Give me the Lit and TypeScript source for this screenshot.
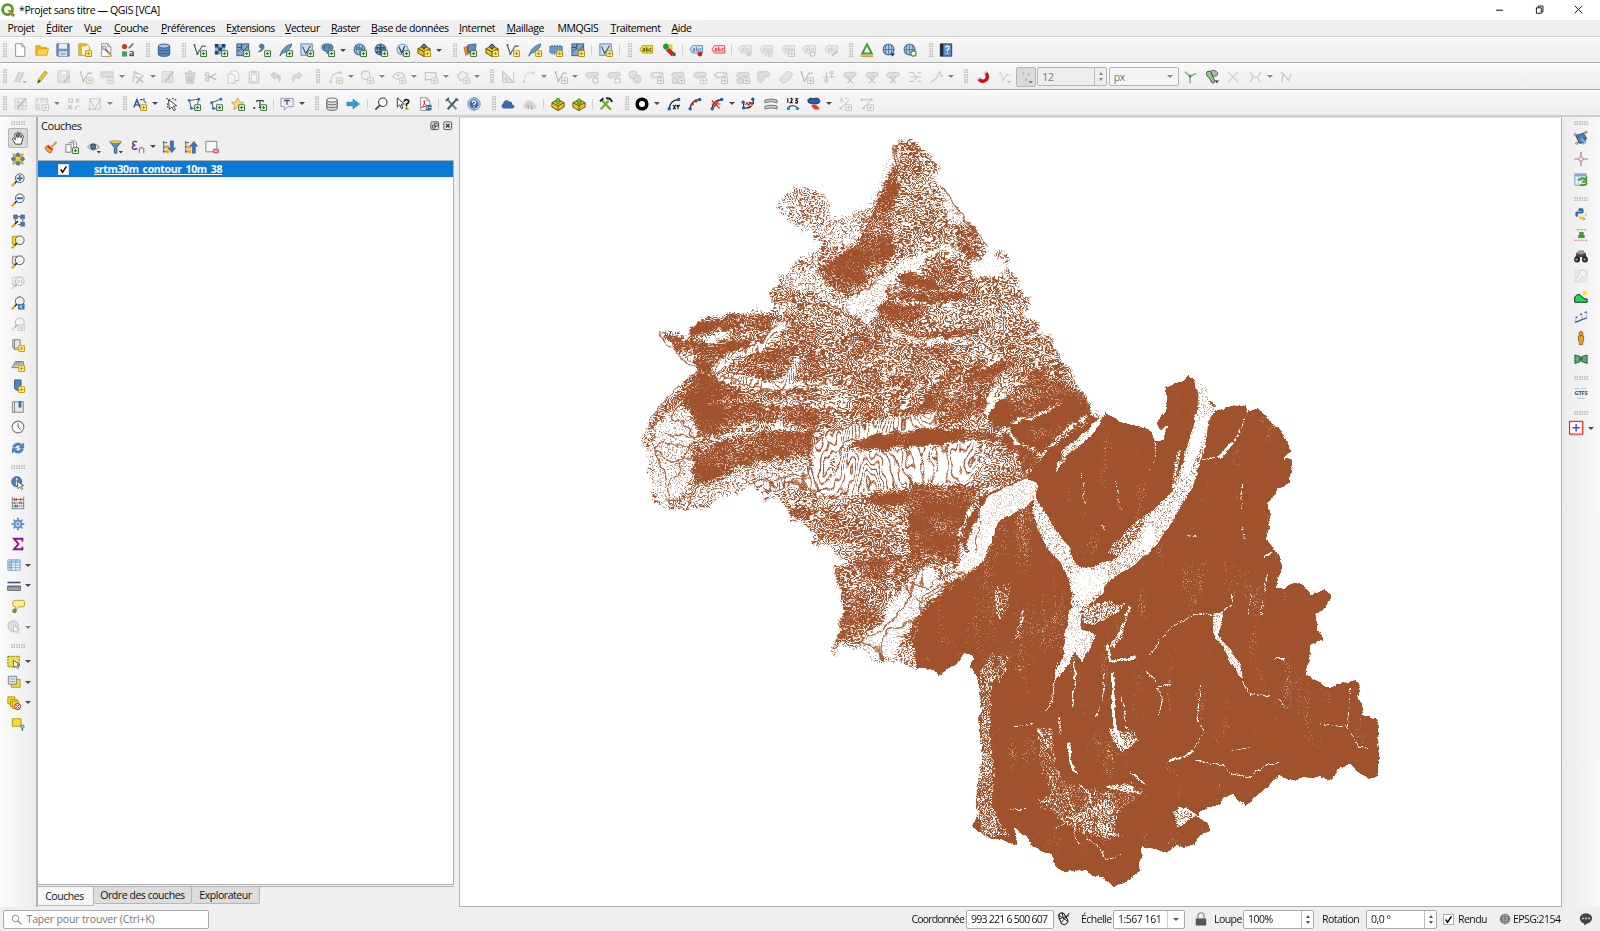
import { LitElement, html, svg, css, nothing } from "lit";
import { customElement, property } from "lit/decorators.js";
import { unsafeSVG } from "lit/directives/unsafe-svg.js";

/* ---------- icon library, 16 x 16 grid ---------- */
const badge = (stroke: string, fill = "#fff") =>
  `<rect x="8.8" y="8.8" width="6.6" height="6.6" rx=".8" fill="${fill}" stroke="${stroke}" stroke-width="1.3"/><path d="M12.1 10.3v3.6M10.3 12.1h3.6" stroke="${stroke}" stroke-width="1.3"/>`;
const G = badge("#3c7a3c");
const Y = badge("#b8960c", "#fff6c0");
const vee = `<path d="M1.5 2.5 5 12.5 10.5 3.5h4" fill="none" stroke="#4a5a6a" stroke-width="1.3"/><circle cx="1.7" cy="2.4" r="1.2" fill="#4a5a6a"/><circle cx="5" cy="12.6" r="1.2" fill="#4a5a6a"/>`;
const feather = `<path d="M1 15C3 8 7 3 14.5 1 14 6 9 10.5 3.500 11.500z" fill="#6c9ac8" stroke="#3b5f86"/>`;
const globe = `<circle cx="7.500" cy="7.500" r="6.300" fill="#a9c8e6" stroke="#3e688f" stroke-width="1.2"/><path d="M1.500 7.500h12M7.500 1.500v12M4.500 2.500q-2 5 0 10M10.500 2.500q2 5 0 10" fill="none" stroke="#3e688f" stroke-width=".9"/>`;
const mesh = `<rect x="1" y="1" width="13.500" height="13.500" fill="#7fa6d0" stroke="#33567c"/><path d="m2 10 4-4 3 3 5-6M1.500 5h5v-4M9 14V9h5" fill="none" stroke="#26466a" stroke-width="1.100"/>`;
const cube = `<path d="M1 6.500 8 3l7 3.500v5L8 15.500l-7-4z" fill="#e8c020" stroke="#5b4a08"/><path d="M1 6.500 8 10l7-3.500M8 10v5.500" fill="none" stroke="#5b4a08"/>`;
const tag = (c: string, s: string) =>
  `<path d="M1 7.500 4 3h11.500v8.500H4z" fill="${c}" stroke="${s}" stroke-width=".9"/><path d="M4.500 6.300h2v3h-2v-1.500h2M8.500 4.500v4.800h2v-2.500h-2M14.300 6.300h-1.800v3h1.800" fill="none" stroke="${s === "#a89000" ? "#443c00" : s}" stroke-width=".9"/>`;
const lens = `<circle cx="10" cy="6" r="5" fill="#eef3f7" stroke="#555" stroke-width="1.100"/><path d="M6.500 9.500 4 12" stroke="#222" stroke-width="1.800"/><path d="M4.300 11.700.8 15.200" stroke="#d9a514" stroke-width="2.200"/>`;
const blob = `<path d="M1 6C1 2 6 2.500 9 3c4-1.500 6.500 0 6 2.500S11 8 8 7.500C6 10 1 9.500 1 6z" fill="#bdbdbd" stroke="#777"/>`;
const page = `<path d="M3 .8h7l3.500 3.500v11H3z" fill="#fff" stroke="#888"/><path d="M10 .8v3.500h3.500" fill="none" stroke="#888"/>`;
const line = `<path d="M2.500 13.500C3 7 6 3.500 13 3" fill="none" stroke="#222" stroke-width="1.200"/><circle cx="2.500" cy="13.500" r="2" fill="#1b62a8"/><circle cx="13.300" cy="2.800" r="2" fill="#1b62a8"/>`;
const poly = `<path d="M2.500 4 13.500 2.500 11 12M2.500 4 5 13h5" fill="none" stroke="#555" stroke-width="1.100"/><g fill="#2a6fe0"><circle cx="2.500" cy="4" r="1.700"/><circle cx="13.500" cy="2.500" r="1.700"/><circle cx="5" cy="13" r="1.700"/></g>`;
const cursor = `<path d="m7 6 7.500 5-3 .5 2 3-1.500 1-2-3L8 14.500z" fill="#fff" stroke="#444" stroke-width=".9"/>`;
const book = `<path d="M2 2h8.500v11H4L2 11z" fill="#e6e6e6" stroke="#777"/><path d="M4 2v11" stroke="#777"/>`;

const ICONS: Record<string, string> = {
  logo: `<circle cx="7.500" cy="7.500" r="5.700" fill="none" stroke="#5a9a2a" stroke-width="3.200"/><path d="M8 8h3l4.500 5v2.500h-3z" fill="#5a9a2a"/><path d="m8 8 6 6" stroke="#ee7913" stroke-width="2"/>`,
  new: page,
  open: `<path d="M1 13.500V3h5l1.500 2H13v2" fill="#f0b91b" stroke="#c8940a" stroke-width=".8"/><path d="M1 14 3.500 6.500h12L13.500 14z" fill="#ffd23e" stroke="#c8940a" stroke-width=".8"/>`,
  save: `<path d="M1 1h14v14H2l-1-1z" fill="#6f98c4" stroke="#4a6c92"/><rect x="3.500" y="1" width="9" height="5.500" fill="#e9eef4"/><rect x="3.500" y="9.500" width="9" height="5.500" fill="#dfe4ea"/><path d="M5 11.500h6M5 13.300h6" stroke="#888" stroke-width=".8"/>`,
  layout: `<path d="M1 1h9l3 3v10H1z" fill="#fbf6dc" stroke="#a88a20"/><path d="M1 1h3.500v13H1zM1 1h9v3H1z" fill="#e2b824"/>${Y}`,
  manager: `${page}<path d="m5 5 8 8" stroke="#777" stroke-width="2.400"/><circle cx="6" cy="5.500" r="2.200" fill="#ddd" stroke="#777"/><path d="m10 11 4.500 4" stroke="#e6b022" stroke-width="2.200"/>`,
  style: `<circle cx="4" cy="4" r="3" fill="#cc3b22"/><path d="m9 6 5-5.500" stroke="#446e9e" stroke-width="1.800"/><rect x="1" y="9.500" width="6" height="6" fill="#4f9a6e"/><path d="M10 10q4-1.500 4 1v4M14 12q-4 0-4 1.500t4 .5" fill="none" stroke="#444" stroke-width="1.300"/>`,
  db: `<path d="M1.500 3.500v9.500c0 3 13 3 13 0V3.500" fill="#5f8fc2" stroke="#2c5580"/><ellipse cx="8" cy="3.500" rx="6.500" ry="2.300" fill="#a8c6e4" stroke="#2c5580"/><path d="M1.500 6.800c0 3 13 3 13 0M1.500 10c0 3 13 3 13 0" fill="none" stroke="#2c5580"/>`,
  dbw: `<path d="M2 3.500v9.500c0 3 12 3 12 0V3.500" fill="#e2e2e2" stroke="#555"/><ellipse cx="8" cy="3.500" rx="6" ry="2.300" fill="#f4f4f4" stroke="#555"/><path d="M2 6.800c0 3 12 3 12 0M2 10c0 3 12 3 12 0" fill="none" stroke="#555"/>`,
  vec: vee + G, vecY: vee + Y,
  raster: `<path d="M1 1h12v12H1z" fill="#8fb4da"/><path d="M1 1h4v4H1zM9 1h4v4H9zM5 5h4v4H5zM1 9h4v4H1z" fill="#1f3f63"/>${G}`,
  mesh: mesh + G, meshY: mesh + Y,
  comma: `<path d="M2 9.500c2.500-1 3.500-2.500 3-3.500-3 0-3.500-4.500 0-4.800C9.500 1 10 8 2 10.500z" fill="#4c7cae" stroke="#2e5680" stroke-width=".6"/>${G}`,
  feather: feather + G, featherY: feather + Y,
  vmesh: `<rect x="1" y="1" width="13" height="13" fill="#cfdeee" stroke="#5b7fa6"/><path d="m3 4 3.500 8L12 3" fill="none" stroke="#33567c" stroke-width="1.200"/>${G}`,
  vmeshY: `<rect x="1" y="1" width="13" height="13" fill="#cfdeee" stroke="#5b7fa6"/><path d="m3 4 3.500 8L12 3" fill="none" stroke="#33567c" stroke-width="1.200"/>${Y}`,
  pg: `<path d="M1 4c0-4 12-4 12.500 0 .5 3-1.500 5-3 5l-1 3H7L6 9C3 10 1 7 1 4z" fill="#5b8dc0" stroke="#2c5580"/><path d="M4 3.500v3M9.500 3.500v3" stroke="#2c5580"/>${G}`,
  wms: globe + `<path d="M3 4q3-2 4 0t4 0v3q-3 1-4 0T3 8z" fill="#4f80b4"/>` + G,
  wcs: globe + `<path d="M2 4.500h11v2H2zM2 9h11v2H2zM6 2h3v11H6z" fill="#1f3f63" opacity=".75"/>` + G,
  wfs: `<circle cx="7.500" cy="7.500" r="6.300" fill="#cfe0f2" stroke="#6d94bc" stroke-width="1.200"/><path d="m3.500 4.500 3 7 3.500-8" fill="none" stroke="#1f3f63" stroke-width="1.300"/>` + G,
  pack: cube + `<path d="M5 4q3-5 6 0l-3 3z" fill="#4f80b4" stroke="#223"/>` + Y,
  layers: `<path d="m1 5 8-2 2 8-8 3z" fill="#e0902a" stroke="#a05a10" stroke-width=".6"/><path d="m4 3 8-1 1 8-8 2z" fill="#c44" /><path d="m6 2 9-1-1 8-8 1z" fill="#5b8dc0" stroke="#33567c" stroke-width=".8"/>${G}`,
  chip: `<rect x="1" y="4" width="14" height="7" fill="#6c9ac8" stroke="#4a78a8"/><path d="M3.500 2v2M6.500 2v2M9.500 2v2M12.500 2v2M3.500 11v2.500M6.500 11v2.500" stroke="#4a78a8" stroke-width="1.300"/>${badge("#b8960c", "#fff6c0")}`,
  labY: tag("#f5e03a", "#a89000"), labR: tag("#ffe2e2", "#e5262b"),
  labB: tag("#cfe2f5", "#4a78a8") + `<circle cx="12.500" cy="12.500" r="2.800" fill="#c22"/>`,
  lab1: tag("#ddd", "#888") + `<circle cx="12.500" cy="12.500" r="2.800" fill="#999"/>`,
  lab2: tag("#ddd", "#888") + `<ellipse cx="11.500" cy="13" rx="3.800" ry="2.200" fill="#fff" stroke="#777"/><circle cx="11.500" cy="13" r="1" fill="#555"/>`,
  lab3: tag("#ddd", "#888") + badge("#888"),
  lab4: tag("#ddd", "#888") + `<circle cx="12" cy="12.500" r="2.600" fill="#fff" stroke="#777" stroke-width="1.200"/>`,
  lab5: tag("#ddd", "#888") + `<path d="m9 15 5.500-5.500" stroke="#777" stroke-width="2.200"/>`,
  diag: `<circle cx="4.500" cy="4" r="3.300" fill="#1d9c2c"/><path d="M8 1.500h4v6H8z" fill="#e6d412"/><path d="m4 8 5-2 5 5-3 4z" fill="#d1261e"/><path d="M12 11h3.500v4H12z" fill="#1d7c2c"/>`,
  tri: `<path d="M8 1.500 13.500 12h-11z" fill="#fff" stroke="#3d9c2a" stroke-width="2.200"/><path d="M1 15h14" stroke="#f08a1c" stroke-width="1.700"/>`,
  net1: globe + `<path d="M9 12h6l-3 3.500z" fill="#26374a"/>`,
  net2: globe + `<circle cx="12" cy="12" r="3" fill="#fff" stroke="#3c8a3c" stroke-width="1.300"/>`,
  help: `<path d="M1.500 1h13v14h-13z" fill="#5c8fc6" stroke="#1d3550"/><path d="M1.500 1H5v14H1.500z" fill="#1d2d3f"/><path d="M7.500 5.500q0-2 2-2t2 1.800-2 2.500v1.700M9.500 11v1.500" fill="none" stroke="#fff" stroke-width="1.400"/>`,
  pencils: `<path d="M1.500 13 6.500 2l2 1-5 10.500zM5.500 13.500 10.500 2.500l2 1-5 10.500z" fill="#b5b0a8" stroke="#777" stroke-width=".7"/><path d="M11 12.500h5l-2.500 3z" fill="#555"/>`,
  pencil: `<path d="M3 15 4.200 10.500 11.500 1.200 14 3.200 6.700 12.600z" fill="#f4cf2a" stroke="#9a7a10" stroke-width=".9"/><path d="m3 15 1.200-4 2.300 1.800z" fill="#3a3420"/>`,
  savee: `<path d="M1 1h13v13H1z" fill="#ccc" stroke="#888"/><path d="M4 1h7v5H4z" fill="#fff" stroke="#999"/><path d="m8 14 6.500-8" stroke="#777" stroke-width="2"/>`,
  shape: `<path d="M1 2h14v6H1z" fill="#b8b8b8" stroke="#888"/>${Y}`,
  vertex: `<path d="M2 14 4 3l7 2" fill="none" stroke="#666" stroke-width="1.200"/><path d="m5 7 9 7M14 6l-8 9" stroke="#777" stroke-width="2"/><circle cx="4" cy="2.500" r="1.800" fill="#999"/>`,
  editc: `<path d="M1.500 1.500h12v12.500h-12z" fill="#ddd4bb" stroke="#888"/><path d="M4 5h7M4 8h7M4 11h7" stroke="#999"/><path d="m5 13 9-11" stroke="#777" stroke-width="2"/>`,
  trash: `<path d="M3 4.500h10L12 15H4z" fill="#e8a8a8" stroke="#b05a5a"/><path d="M1.500 3.500h13M6 1.500h4M6 7v6M8 7v6M10 7v6" stroke="#a05050" stroke-width="1.200"/>`,
  cut: `<path d="m14 4-9 5.500M14 11 5 7" stroke="#666" stroke-width="1.400"/><circle cx="3.500" cy="5" r="1.900" fill="none" stroke="#666" stroke-width="1.300"/><circle cx="3.500" cy="11" r="1.900" fill="none" stroke="#666" stroke-width="1.300"/>`,
  copy: `<path d="M5.500 1h6l3 3v8h-9z" fill="#fff" stroke="#777"/><path d="M2 4.500h6l2.500 2.500v8H2z" fill="#f4f4f4" stroke="#777"/>`,
  paste: `<path d="M2.500 2h11v13h-11z" fill="#ddd" stroke="#777"/><path d="M5 5h6v8H5z" fill="#fff" stroke="#999"/><path d="M5.500.8h5v2.500h-5z" fill="#888"/>`,
  undo: `<path d="M2 6 6.500 2v2.500C12 4 14.500 8 12 13.500c0-4-2-5.500-5.500-5.300V10.500z" fill="#d8a090" stroke="#a66"/>`,
  redo: `<path d="M14 6 9.500 2v2.500C4 4 1.500 8 4 13.500c0-4 2-5.500 5.500-5.300V10.500z" fill="#b4c0b0" stroke="#686"/>`,
  arc: `<path d="M2 14C2 6 6 3 13 3" fill="none" stroke="#777" stroke-width="1.200"/><circle cx="2" cy="13.500" r="1.500" fill="#888"/><circle cx="13" cy="3" r="1.500" fill="#888"/>${Y}`,
  circ: `<circle cx="6.500" cy="6" r="5" fill="#eee" stroke="#777" stroke-width="1.200"/>${Y}`,
  ell: `<path d="M1 8C3 2 11 1 14.500 6 12 11 5 12 1 8z" fill="#eee" stroke="#777" stroke-width="1.200"/><circle cx="7" cy="6" r="1.500" fill="#888"/>${Y}`,
  rec: `<path d="M1.500 3h12v8h-12z" fill="#eee" stroke="#777" stroke-width="1.200"/><path d="M.5 2h2v2h-2zM12.500 2h2v2h-2zM.5 10h2v2h-2z" fill="#888"/>${Y}`,
  pent: `<path d="M2 6 7 1.500 13 4l-1 6-7 2z" fill="#eee" stroke="#777" stroke-width="1.200"/>${Y}`,
  sq: `<path d="M2 1.500 14 14H2z" fill="#ddd" stroke="#777" stroke-width="1.300"/><path d="m5 8 3.500 3.500H5zM14.500 1.500v13" fill="none" stroke="#777"/>`,
  dotc: `<path d="M2.500 14C2 6 5 3 13.500 3" fill="none" stroke="#777" stroke-width="1.200" stroke-dasharray="2 1.500"/><circle cx="2.500" cy="13.500" r="1.500" fill="#999"/><circle cx="13" cy="3" r="1.500" fill="#999"/>`,
  vgrey: vee + badge("#777"),
  b1: blob + `<circle cx="12" cy="12" r="3" fill="#fff" stroke="#777" stroke-width="1.200"/>`,
  b2: blob + `<path d="M9 10h6v4.500H9z" fill="#fff" stroke="#777" stroke-width="1.200"/>`,
  b3: `<circle cx="5.500" cy="5.500" r="4.500" fill="#ccc" stroke="#777"/><circle cx="10.500" cy="10.500" r="4.500" fill="#ccc" stroke="#777"/><circle cx="10.500" cy="10.500" r="1.800" fill="#fff" stroke="#777"/>`,
  b4: blob + `<ellipse cx="7" cy="5.500" rx="3" ry="1.300" fill="#fff"/>` + badge("#777"),
  b5: blob + `<path d="M1 11c4-3 8-1 7 4H2z" fill="#bdbdbd" stroke="#777"/>` + badge("#777"),
  b6: blob + badge("#a08a60"),
  b7: blob + `<ellipse cx="7" cy="5.500" rx="3.500" ry="1.500" fill="#fff"/>` + badge("#a07070"),
  b8: `<path d="M2 2h9c5 0 5 6 0 5.500-4 0-3 7-7 7S0 4 2 2z" fill="#bdbdbd" stroke="#777"/>`,
  b9: `<path d="M2 13C-1 9 5 7 7 4c3-5 11-1 7 4-3 4-8 9-12 5z" fill="#c9c9bd" stroke="#777"/>`,
  split: `<path d="M1 8h14M5 2v12M11 1v8" stroke="#777" stroke-width="1.200"/><circle cx="5" cy="12" r="2" fill="#bbb" stroke="#777"/><circle cx="11" cy="3" r="2" fill="#bbb" stroke="#777"/>`,
  scis: blob + `<path d="m5 8 6 7M11 8l-6 7" stroke="#a66" stroke-width="1.400"/>`,
  merge: `<path d="M1 3h5l4 5-4 5H1M15 3h-4M15 13h-4M2 8h13" fill="none" stroke="#888" stroke-width="1.200"/>`,
  rot: `<path d="m2 14 6-4 4-8 3 5h-3" fill="none" stroke="#888" stroke-width="1.300"/>`,
  magnet: `<path d="M3.200 9.500C5 15 13 13 13 7.500 13 5 12 4 10.800 2.800" fill="none" stroke="#d01010" stroke-width="3.800"/><path d="m9.200 4.300 3-3M1.200 10.300l4-1.500" stroke="#f0c8c8" stroke-width="2.200"/>`,
  snapv: `<path d="m2 2 4 10 3-6h5" fill="none" stroke="#888" stroke-width="1.500" stroke-dasharray="2.500 1"/><path d="M10 12.500h5l-2.500 3z" fill="#666"/>`,
  dots: `<g fill="#aaa"><circle cx="5" cy="4" r="1.200"/><circle cx="11" cy="5" r="1.200"/><circle cx="8" cy="11" r="1.200"/></g><path d="M11 12.500h5l-2.500 3z" fill="#777"/>`,
  topo: `<path d="M2 2 8 7l7-3M8 7v8" fill="none" stroke="#7ab87a" stroke-width="1.700"/><circle cx="8" cy="7" r="1.600" fill="#777"/>`,
  snapg: `<path d="M5 2.500C7-.500 14 0 14.500 4c0 3-3 3.500-5 3z" fill="#b4b4b4" stroke="#555"/><path d="M1.500 4c0-3.500 6-3.500 6 0C8 7 11 10 11 13c0 2.500-3.500 2.500-4 0C6.500 9 1.500 8 1.500 4z" fill="#8ccc86" stroke="#333"/><path d="M11 12h5l-2.500 3z" fill="#333"/>`,
  xx: `<path d="m2 2 12 12M14 2 2 14" stroke="#999" stroke-width="1.300"/>`,
  hh: `<path d="m2 2 4 6h5l4-6M2 14l4-6M11 8l3 6" fill="none" stroke="#998" stroke-width="1.700"/>`,
  nn: `<path d="m3 14 2-10 6 8 3-8M2 3l4 2" fill="none" stroke="#887" stroke-width="1.500"/>`,
  grA: `<path d="M1 1.500h13v12.500H1zM1 6h13M1 10h13M5 1.500V14M10 1.500V14" fill="#eee" stroke="#888"/><path d="m4 13 9-11" stroke="#666" stroke-width="2"/>`,
  grB: `<path d="M1 1.500h13.500v12.500H1z" fill="#bbb" stroke="#888"/><path d="m1 6 13 2M5 2l2 12M11 2l-3 12" stroke="#fff"/>${badge("#888")}`,
  grC: `<path d="M2 2h4v4H2zM10 2l4 4M14 2l-4 4M2 10l4 4M6 10H2v4M9.500 14q0-4 5-4" fill="none" stroke="#777" stroke-width="1.300"/>`,
  grD: `<path d="M2 2h12v12H2zM2 2l6 12 6-12" fill="none" stroke="#888" stroke-width="1.200"/><circle cx="2" cy="14" r="1.500" fill="#888"/>`,
  abc: `<path d="M1 12 4.500 3 8 12M2.500 9h4" fill="none" stroke="#2c5a92" stroke-width="1.700"/><path d="M8 3h3M12.500 1.500v3M13 5l2 2" stroke="#2c5a92" stroke-width="1.400"/>${Y}`,
  selc: `<path d="M1.500 1.500 6 3.500M3 7v5M8 1.500l5 2" stroke="#555" stroke-width="1.500" stroke-dasharray="2 1.300"/><path d="m4 3 9.500 7-4 .5 2.500 4-2 1-2-4-3 2.500z" fill="#fff" stroke="#333"/>`,
  poly: poly + G,
  pline: `<path d="M13.500 2.500 3 6.500 5 13h5" fill="none" stroke="#555" stroke-width="1.100"/><g fill="#2a6fe0"><circle cx="13.500" cy="2.500" r="1.700"/><circle cx="3" cy="6.500" r="1.700"/><circle cx="5" cy="13" r="1.700"/></g>${G}`,
  star: `<path d="m7.500.8 2 4.800 5 .4-3.800 3.400 1.200 5-4.400-2.800-4.400 2.800 1.200-5L.5 6l5-.4z" fill="#fbd78a" stroke="#d09a38"/>${G}`,
  txt: `<path d="M4.500 6V4h7v2M8 4v8M6.500 12h3" fill="none" stroke="#333" stroke-width="1.300"/><circle cx="1.500" cy="12.500" r="1.200" fill="#333"/>${G}`,
  tbub: `<path d="M1 1.500h14v9.500H9l-4 4v-4H1z" fill="#e9eff5" stroke="#8794a0"/><path d="M5.500 5V3.800h5V5M8 3.800v5" fill="none" stroke="#333" stroke-width="1.200"/>`,
  arrow: `<path d="M1 6h7V2.500L15.500 8 8 13.500V10H1z" fill="#2d9de0" stroke="#1d70a8" stroke-width=".7"/>`,
  mag: `<circle cx="10" cy="6" r="4.800" fill="#fafafa" stroke="#444" stroke-width="1.300"/><path d="M6.500 9.500 1.500 14.500" stroke="#444" stroke-width="2"/>`,
  whats: `<path d="m1.500 1 8 7-3.500.3 2 4.200-1.700.8-2-4.300L1.500 11.500z" fill="#fff" stroke="#222"/><path d="M9.500 5.500q0-2.500 2.500-2.500t2.500 2.300q0 1.500-2.500 2.700v2.500M12 12v2" fill="none" stroke="#222" stroke-width="2"/><path d="M12 14h3" stroke="#e8c020" stroke-width="2"/>`,
  pdf: `${page}<path d="M4 12c4-3 4-8 3-8s0 6 5 6.500-5-.5-8 1.500" fill="none" stroke="#d22" stroke-width="1.100"/><rect x="9" y="9" width="6.500" height="6" fill="#3a6a9a"/><path d="M10.500 10.500v3M12.500 12h2" stroke="#fff"/>`,
  tools: `<path d="M2.500 2.500 13 14" stroke="#6d8cae" stroke-width="2.400"/><path d="M13.500 2.500 3 14" stroke="#555" stroke-width="2.200"/><path d="M1 4.500 4.500 1M12 1.500 15 4" stroke="#555" stroke-width="2"/>`,
  qm: `<circle cx="8" cy="8" r="7" fill="#dfe9f4" stroke="#3b6ea8"/><circle cx="8" cy="8" r="5.300" fill="#3b6ea8"/><path d="M6 6.500q0-2 2-2t2 1.700-2 2.100v1.200M8 10.700v1.300" fill="none" stroke="#fff" stroke-width="1.400"/>`,
  cloud: `<path d="M3.500 13C.5 13-.500 9 2.500 8 2 4.500 7 2 9 5.500 12 4.500 13 7 12.800 8.500 16.500 8.500 16 13 13 13z" fill="#3d66ae"/>`,
  cloudg: `<path d="M3.500 13C.5 13-.500 9 2.500 8 2 4.500 7 2 9 5.500 12 4.500 13 7 12.800 8.500 16.500 8.500 16 13 13 13z" fill="#d4d4d4"/><path d="M6 14V9m0 0L4.500 10.500M6 9l1.500 1.500M10 9v5m0 0-1.500-1.500M10 14l1.500-1.500" stroke="#aaa" stroke-width="1" fill="none"/>`,
  box: cube + `<path d="M4.500 4.500 8 8l3.500-3.500H9.500V1.500h-3v3z" fill="#6ac43a" stroke="#2c6010" stroke-width=".6"/>`,
  box2: cube + `<path d="M4.500 5 8 1.500 11.500 5h-2v3h-3V5z" fill="#6ac43a" stroke="#2c6010" stroke-width=".6"/>`,
  hammer: `<path d="m2 14 9-10" stroke="#6aac2a" stroke-width="2.400"/><path d="M3 3.500 13.500 14.500" stroke="#6aac2a" stroke-width="2.400"/><path d="M8 1.500q5-1 7 4M1 5l4-3.500" fill="none" stroke="#222" stroke-width="2.200"/>`,
  ring: `<circle cx="8" cy="8" r="5.500" fill="#fff" stroke="#000" stroke-width="4"/>`,
  cxy: line + `<path d="m7 9 3 5M10 9l-3 5M11 9l1.500 2.500L14.500 9M12.500 11.500V14" stroke="#222" stroke-width="1.300"/>`,
  cred: line + `<circle cx="5" cy="8" r="1.800" fill="#d22"/><circle cx="9" cy="4.500" r="1.800" fill="#d22"/>`,
  cx: line + `<path d="m2 4 9 9M11 3 4 12M2 8h10" stroke="#d22" stroke-width="1.400"/>`,
  czig: `<path d="M3 6v6q5 2 9-2M14 2.500v5L9 6" fill="none" stroke="#222" stroke-width="1.300"/><g fill="#1b62a8"><circle cx="2.500" cy="6" r="1.900"/><circle cx="3" cy="12.500" r="1.900"/><circle cx="13.500" cy="2.500" r="1.900"/></g><path d="m5 9 2-2.500 1.500 3L10.500 7l3 2" fill="none" stroke="#d22" stroke-width="1.500"/>`,
  hatch: `<path d="M1 3.500q7-2.500 14 0v3q-7-2.500-14 0zM1 13.500q7-2 14 0v-3q-7-2.500-14 0z" fill="#ccc" stroke="#666"/>`,
  n123: `<path d="M2 1.500v5M5 2.500q2-2 2 0T5 6.500h2.500M10.500 2h2.500l-1.500 2q2 0 1.500 2t-2.500 0" fill="none" stroke="#111" stroke-width="1.300"/><path d="M3 13.500q0-4 5-3.500t5 3.500" fill="none" stroke="#222" stroke-width="1.200"/><circle cx="2.800" cy="13.200" r="2" fill="#1b8ad8"/><circle cx="13" cy="13.200" r="2" fill="#1b8ad8"/>`,
  redb: `<path d="M1 4c0-3 5-3 7-2 3-1.500 7-.5 6.500 3S9 8 7 7.500 1 8 1 4z" fill="#1b62a8" stroke="#123"/><path d="M5 9c3-1 7 0 9 4-2 3-8 1-9-4z" fill="#e32"/>`,
  lastA: `<path d="M2 6 4 1l2 5M8 2h5M3 13l9-9" stroke="#888" stroke-width="1.200" fill="none"/><circle cx="3" cy="13" r="1.500" fill="#888"/>${badge("#888")}`,
  lastB: `<path d="M2 3h11L4 13" stroke="#888" stroke-width="1.200" fill="none"/><circle cx="2" cy="3" r="1.500" fill="#888"/><circle cx="13" cy="3" r="1.500" fill="#888"/><circle cx="4" cy="13" r="1.500" fill="#888"/>${badge("#888")}`,
  hand: `<path d="M5 15 1.800 9.500c-.8-1.500 1-2 2-.8L5 10 4.200 4c-.2-1.500 1.600-1.500 1.900-.2L7 7.500V2.200c0-1.500 1.800-1.500 1.800 0v5l.9-4.400c.3-1.300 2-1 1.800.4L11 8l1.300-2.500c.6-1.200 2-.4 1.700.7L12.500 12l-.7 3z" fill="#fff" stroke="#333"/>`,
  panto: `<g fill="#f2d024" stroke="#9a8210" stroke-width=".7"><rect x="5" y="5" width="6" height="6"/><path d="m2 2 4 1-3 3zM14 2l-4 1 3 3zM2 14l4-1-3-3zM14 14l-4-1 3-3z"/></g><g fill="#4f80b8" stroke="#2c5580" stroke-width=".6"><circle cx="8" cy="3" r="2"/><circle cx="8" cy="13.200" r="2"/><circle cx="2.600" cy="8" r="2"/><circle cx="13.400" cy="8" r="2"/></g>`,
  zin: lens + `<path d="M10 2.500v7M6.500 6h7" stroke="#3a6ea8" stroke-width="2"/>`,
  zout: lens + `<path d="M6.500 6h7" stroke="#3a6ea8" stroke-width="2.200"/>`,
  zfull: `<path d="M3 1h4.500v4.500H3zM11 1h4.500v4.500H11zM11 9.500h4.500V14H11z" fill="#4a7ab0" stroke="#2c5580" stroke-width=".6"/><path d="M5 6v4M8 3h3M13.500 6v3M8 12h3" fill="none" stroke="#555"/><path d="m8 8-4 4" stroke="#222" stroke-width="1.600"/><path d="M4.300 11.700.8 15.200" stroke="#d9a514" stroke-width="2.200"/>`,
  zsel: `<path d="M1.500 1.500h6v9h-6z" fill="#f6dc2c" stroke="#a8900c"/>` + lens + `<path d="M10 2v8a4 4 0 0 1-4-4 4 4 0 0 1 4-4z" fill="#f4eeb0"/>`,
  zlay: `<path d="M1.500 1.500h6v9h-6z" fill="#ddd" stroke="#888"/>` + lens,
  znat: `<path d="M1.500 1.500h6v9h-6z" fill="#ddd" stroke="#888"/>` + lens + `<path d="M8 4v4M12 4v4M10 5v.8M10 7v.8" stroke="#555"/>`,
  zlast: lens + `<rect x="8" y="9" width="7.500" height="6.500" fill="#3f76b4"/><path d="m13 10.500-3 1.700 3 1.700" fill="none" stroke="#fff"/>`,
  znext: lens + `<rect x="8" y="9" width="7.500" height="6.500" fill="#ddd" stroke="#888"/><path d="m10.500 10.500 3 1.700-3 1.700" fill="none" stroke="#666"/>`,
  mapv: book + `<path d="M5 11h7" stroke="#999"/>` + badge("#c8a010", "#fff2a0"),
  map3: `<path d="m1 11 4-7h9l1 7z" fill="#ccc" stroke="#777"/><path d="M3 8q5-3 9 1M5 6q4-2 8 0" fill="none" stroke="#777" stroke-width=".8"/>${badge("#c8a010", "#fff2a0")}`,
  book: `<path d="M4 1h7.500v10L8 13.500 4 11z" fill="#4f86bc" stroke="#2f5c88"/>${badge("#c8a010", "#fff2a0")}`,
  bookl: `<path d="M1.500 2H14v12H1.500zM4 2v12" fill="#e9e9e9" stroke="#777"/><path d="M8.500 1h3.500v7L10.200 9 8.500 8z" fill="#3f76b4"/>`,
  clock: `<circle cx="8" cy="8" r="6.700" fill="#fafafa" stroke="#777" stroke-width="1.200"/><path d="M8 3.500V8l3 3" fill="none" stroke="#555" stroke-width="1.100"/>`,
  refresh: `<path d="M2 7C3 1.500 10 1 12 4l2.500-1.500V8H9l1.800-1.800C9 4 6 4.500 5 7zM14 9c-1 5.500-8 6-10 3l-2.500 1.500V8.500H7L5.200 10C7 12 10 11.500 11 9z" fill="#4a8ad0" stroke="#2a5c98" stroke-width=".6"/>`,
  ident: `<circle cx="6.500" cy="6.500" r="5.800" fill="#4a7fb8" stroke="#2c5580" stroke-width=".8"/><path d="M6.500 5.500v5M6.500 2.500v1.700" stroke="#fff" stroke-width="1.800"/>${cursor}`,
  abacus: `<path d="M1.500 1v14M14.500 1v14M1 14.500h14M1.500 4h13M1.500 8h13M1.500 11.500h13" stroke="#777" stroke-width="1"/><path d="M4 2.500v3M6 2.500v3M11 2.500v3" stroke="#d33" stroke-width="1.500"/><path d="M4 6.500v3M10 6.500v3M12 6.500v3" stroke="#3a3" stroke-width="1.500"/><path d="M5 10v3M7 10v3" stroke="#36c" stroke-width="1.500"/>`,
  gear: `<circle cx="8" cy="8" r="4" fill="#b9d0e8" stroke="#5a90c8" stroke-width="2"/><path d="M8 .8v3M8 12.200v3M.8 8h3M12.200 8h3M2.900 2.900l2 2M11.100 11.100l2 2M13.100 2.900l-2 2M4.900 11.100l-2 2" stroke="#5a90c8" stroke-width="2"/><circle cx="8" cy="8" r="1.200" fill="#4a80b8"/>`,
  sigma: `<path d="M13 5V2H3.500l5 6-5 6H13v-3" fill="none" stroke="#92108e" stroke-width="2.200"/>`,
  table: `<path d="M1 2h14v12H1z" fill="#eef5fb" stroke="#6f9cc8"/><path d="M1 2h14v3H1zM1 2h4v12H1z" fill="#a8cbea"/><path d="M1 5h14M1 8h14M1 11h14M5 2v12M10 2v12" stroke="#6f9cc8" stroke-width=".8"/>`,
  ruler: `<path d="M.5 4h15" stroke="#33567c" stroke-width="1.800"/><path d="M.8 8h14.500v5H.8z" fill="#aaa" stroke="#555"/><path d="M3 8v2.500M5.500 8v2.500M8 8v2.500M10.500 8v2.500M13 8v2.500" stroke="#555" stroke-width=".8"/>`,
  tip: `<path d="M5 1.500h8q2.500 0 2.500 2.500v2.500q0 2.500-2.500 2.500H9l-4 4V9Q2 8.500 2 6.500V4q0-2.500 3-2.500z" fill="#fbec8a" stroke="#b09a28"/><circle cx="4" cy="13.500" r="2.200" fill="#5fa04a" stroke="#366a26" stroke-width=".7"/>`,
  gearz: `<circle cx="7" cy="7" r="5.800" fill="#ccc" stroke="#777" stroke-width="1.400"/><circle cx="7" cy="7" r="2.500" fill="#fff" stroke="#777"/>${cursor}`,
  sel: `<path d="M1 1.500h13v12H1z" fill="#f4e03a" stroke="#555" stroke-dasharray="2 1.200"/>${cursor}`,
  selv: `<path d="M5 5h10v9H5z" fill="#f6dc2c" stroke="#a8900c"/><path d="M1.500 1.500h9.500v9H1.500z" fill="#dfe5ea" stroke="#778"/><path d="M3 4.500h6.500M3 7.500h6.500" stroke="#99a"/>`,
  desel: `<path d="M1 1h8v8H1z" fill="#f6dc2c" stroke="#a8900c"/><path d="M4 4h8v8H4z" fill="#f6dc2c" stroke="#a8900c"/><path d="M6 6h7v8H6z" fill="#f6dc2c" stroke="#a8900c"/><circle cx="12" cy="12" r="3.300" fill="#fff" stroke="#d33" stroke-width="1.200"/><path d="m10 10 4 4M14 10l-4 4" stroke="#d33"/>`,
  selpin: `<path d="M1.500 2h10v8.500h-10z" fill="#f6dc2c" stroke="#a8900c"/><circle cx="13" cy="11" r="2" fill="#bcd" stroke="#468"/><path d="M13 13v3" stroke="#468" stroke-width="1.400"/>`,
  brush: `<path d="M1 8.500 5 6l5 4-2 4.500q-5 0-7-6z" fill="#f0b020" stroke="#b33" stroke-width=".8"/><path d="M4 7 9 11" stroke="#d22" stroke-width="2"/><path d="M8 8.500 14.500 2" stroke="#d8a060" stroke-width="2.600"/>`,
  grp: `<path d="M1 5h6v9H1zM4 3h6v9M7 1h4l2 2v8" fill="#f4f4f4" stroke="#777"/>${G}`,
  eye: `<path d="M.5 8Q7 .5 14 8 7 15 .5 8z" fill="#e8eef2" stroke="#777"/><circle cx="7" cy="7.500" r="3" fill="#4c7aa8" stroke="#234"/><path d="M11 12.500h5l-2.500 3z" fill="#444"/>`,
  filter: `<path d="M1 2h13L9 8.500V15H6V8.500z" fill="#5a8cc0" stroke="#2f5c88"/><ellipse cx="7.500" cy="2.300" rx="6.500" ry="1.500" fill="#f0d53a" stroke="#8a8020" stroke-width=".7"/><path d="M11 12.500h5l-2.500 3z" fill="#444"/>`,
  eps: `<path d="M7 2Q2 1 2 3.500T5 6Q1 6.500 1.500 9T7 10" fill="none" stroke="#6a3a8a" stroke-width="1.700"/><path d="M9.500 15V10q2.500-3 5 0v5M9.500 12v3M14.500 12v3" fill="none" stroke="#999" stroke-width="1.600"/>`,
  exp: `<path d="M2 1v14M1 3h5M1 8h5M1 13h5" stroke="#555" stroke-width="1"/><path d="M4 6h4v4H4zM4 11h4v4H4z" fill="#f0a83a"/><path d="M9.500 1h3.500v8h2.500L11.200 14.500 7 9h2.500z" fill="#3f76b4" stroke="#234f80" stroke-width=".6"/>`,
  col: `<path d="M2 1v14M1 3h5M1 8h5M1 13h5" stroke="#555" stroke-width="1"/><path d="M4 6h4v4H4zM4 11h4v4H4z" fill="#f0a83a"/><path d="M9.500 15h3.500V7h2.500L11.200 1.500 7 7h2.500z" fill="#3f76b4" stroke="#234f80" stroke-width=".6"/>`,
  rem: `<path d="M1 1.500h12.500v12H1z" fill="#f8f8f8" stroke="#777"/><rect x="9" y="10" width="7" height="5" rx="1.500" fill="#e25a66"/><path d="M10.500 12.500h4" stroke="#fff" stroke-width="1.200"/>`,
  rst: `<path d="m2 5 9-2.500 3 5-2 6-6 .5z" fill="#4a80b4" stroke="#234f80"/><path d="m1 5 4 2M10 3l3-2M4 14l2-3M11 8l4 1" stroke="#555" stroke-width="1"/><g fill="#e8c830" stroke="#765" stroke-width=".7"><circle cx="1.500" cy="4" r="1.300"/><circle cx="14" cy="1.500" r="1.300"/><circle cx="3" cy="14" r="1.300"/></g><path d="m8 9 5 4-3 2" fill="none" stroke="#8fb8de" stroke-width="1.800"/>`,
  cross: `<path d="M8 0v6M8 10v6M0 8h6M10 8h6" stroke="#888" stroke-width="1.400"/><circle cx="8" cy="8" r="2.500" fill="none" stroke="#d77"/>`,
  gridr: `<path d="M1 1h13v13H1z" fill="#eef5fb" stroke="#6f9cc8"/><path d="M1 1h13v3H1z" fill="#7aaad8"/><path d="M5 4v10M9 4v10M1 8h13" stroke="#a8c4e0"/><path d="M5 8.500q4-4 7-1.500l2-1.500v4.500H9.500M15 11.500q-4 4-8 1.500" fill="none" stroke="#4f9c2a" stroke-width="2.200"/>`,
  py: `<path d="M8 1C4.500 1 5 3 5 4.500h3.500V5H3C1 5 1 11 3 11h1.500V9q0-1.500 2-1.500h3q1.500 0 1.500-2V3Q11 1 8 1z" fill="#3572a5"/><path d="M8 14.500c3.500 0 3-2 3-3H8v-.8h5q2-.5 1.500-4H13v1.500Q13 10 11 10H8Q6 10 6 12q0 2.500 2 2.500z" fill="#f5cf3e"/><path d="m10 12 3 1.500-3 1.500" fill="none" stroke="#888"/>`,
  down: `<path d="M3 2h11M0 14h16" stroke="#e66" stroke-dasharray="3 1" stroke-width="1"/><path d="M6 4.500h5V8h1.200v3.500H4.800V8H6z" fill="#3f9f2e"/>`,
  bino: `<path d="M3 4h3.500v2h3V4H13l2.500 9H9.500V9h-3v4H.5z" fill="#444"/><circle cx="3.500" cy="12" r="3.300" fill="#222"/><circle cx="12.500" cy="12" r="3.300" fill="#222"/><path d="M5 1.500h6l1 4H4z" fill="#999"/><circle cx="3" cy="12" r="1.400" fill="#b86"/><circle cx="12" cy="12" r="1.400" fill="#b86"/>`,
  torch: `<rect width="16" height="16" fill="#d8d8d8"/><path d="m1 13 6-7-1-3 4-2 5 4-3 4H9l-6 6z" fill="#fff" stroke="#888"/>`,
  hill: `<path d="M.8 14V8Q6 2 9 8q2 2 6 2.500V14z" fill="#18e04a" stroke="#111"/><circle cx="12.500" cy="3.500" r="2" fill="#f5e020"/><path d="M12.500 0v7M9 3.500h7M10 1l5 5M15 1l-5 5" stroke="#f5e020" stroke-width=".8"/>`,
  prof: `<path d="m1 14 4-1 4-2 6-2" fill="none" stroke="#3a6aa8" stroke-width="1.800"/><path d="M2 13V8M9 10V4M14.500 9V2" stroke="#999" stroke-width=".8"/><path d="m2 8 2 .7M9 4.500l-2 .7M14.500 2.300l-2.500.7" stroke="#3a6aa8" stroke-width="1.700"/>`,
  man: `<circle cx="8" cy="2.800" r="2.300" fill="#f0a020" stroke="#7a4a08" stroke-width=".8"/><path d="M5 5.500h6v6h-1v4H6v-4H5z" fill="#f0a020" stroke="#7a4a08" stroke-width=".8"/>`,
  wbino: `<path d="M1 3.500 7 5v6l-6 2zM15 3.500 9 5v6l6 2z" fill="#5fa878" stroke="#244a34"/><path d="M6.500 6h3v4h-3z" fill="#3a6a4a"/>`,
  redplus: `<rect x="-.5" y=".5" width="15" height="14.500" fill="#fff" stroke="#f22" stroke-width="1.400"/><path d="M7 3.500v8.500M2.800 7.700h8.500" stroke="#44e" stroke-width="1.700"/>`,
  mouse: `<path d="M3 2q-2 3 0 6l2 5q3 3 6 0t0-6L8 2Q5 0 3 2z" fill="#fff" stroke="#222" stroke-width="1.200"/><path d="m1 3 12 8M2 8l12-4M6 1l1 5M14 1 5 12" stroke="#222" stroke-width="1.100"/>`,
  lock: `<path d="M4.500 8V4.500q0-3.500 3.500-3.500t3.500 3.500V8" fill="none" stroke="#999" stroke-width="1.600"/><rect x="2" y="7.500" width="12" height="8" rx="1" fill="#555"/>`,
  epsg: `<circle cx="8" cy="8" r="6.500" fill="#bbb" stroke="#666"/><path d="M1.500 8h13M8 1.500v13M4.500 3q-2.500 5 0 10M11.500 3q2.500 5 0 10M3 5h10M3 11h10" fill="none" stroke="#555" stroke-width=".9"/>`,
  bubble: `<path d="M8 1.500c9 0 9 10.500 1.500 11.500L6 15.500V13C-1 12-1 1.500 8 1.500z" fill="#444"/><g fill="#ddd"><circle cx="4.500" cy="7.300" r="1.100"/><circle cx="8" cy="7.300" r="1.100"/><circle cx="11.500" cy="7.300" r="1.100"/></g>`,
  seek: `<circle cx="6.500" cy="6.500" r="4.800" fill="none" stroke="#777" stroke-width="1.200"/><path d="m10 10 5 5" stroke="#777" stroke-width="1.500"/>`,
  min: `<path d="M3 9h10" stroke="#000" stroke-width="1.400"/>`,
  max: `<path d="M3.500 5.500h7v8h-7zM6 5V3h7v8.500h-2" fill="none" stroke="#000" stroke-width="1.300"/>`,
  close: `<path d="m2.500 2.500 11 11M13.500 2.500l-11 11" stroke="#000" stroke-width="1.300"/>`,
  undock: `<rect x="1.500" y="1.500" width="13" height="13" rx="2" fill="none" stroke="#444" stroke-width="1.500"/><path d="M7 4h5v5H7zM4 7h5v5H4z" fill="#eee" stroke="#444" stroke-width="1.400"/>`,
  shut: `<rect x="1.500" y="1.500" width="13" height="13" rx="2" fill="none" stroke="#444" stroke-width="1.500"/><path d="m5 5 6 6M11 5l-6 6" stroke="#333" stroke-width="2.200"/>`,
  gtfs: `<path d="M1 3h5M8 3h6" stroke="#8cc" stroke-width="1"/><text x="8" y="10.500" font-family="Open Sans" font-weight="700" font-size="6.500" text-anchor="middle" fill="#445">GTFS</text><path d="M4 14h8" stroke="#aac"/>`,
};

@customElement("q-icon")
class QIcon extends LitElement {
  @property() name = "";
  static styles = css`
    :host { display: block; width: 14px; height: 14px; }
    svg { display: block; width: 100%; height: 100%; overflow: visible; }
  `;
  render() {
    return html`<svg viewBox="0 0 16 16">${unsafeSVG(ICONS[this.name] ?? "")}</svg>`;
  }
}

/* Token grammar: "|" grip, "," separator, "v" menu arrow, "~x" disabled icon, "+n"/"-n" extra space. */
@customElement("q-bar")
class QBar extends LitElement {
  @property() items = "";
  @property({ type: Boolean, reflect: true }) vertical = false;
  static styles = css`
    :host { display: flex; align-items: center; }
    :host([vertical]) { flex-direction: column; }
    .cell { flex: none; width: 21.5px; display: flex; justify-content: center; align-items: center; }
    .dim { opacity: .38; filter: grayscale(.6); }
    .grip { flex: none; width: 4px; height: 15px; margin: 0 3px 0 7.500px; background-image: radial-gradient(circle at 1px 1px, #b5b5b5 .7px, transparent .9px); background-size: 2.500px 2.500px; }
    .sep { flex: none; width: 1px; height: 10px; margin: 0 2.700px; background: #cfcfcf; }
    .arr { flex: none; width: 0; border: 3.200px solid transparent; border-top: 3.800px solid #4a4a4a; border-bottom: 0; margin: 0 2px 0 1px; }
    .arr.dim { border-top-color: #555; opacity: .7; }
    .sp { flex: none; }
    :host([vertical]) .cell { width: 100%; height: 20.650px; }
    :host([vertical]) .grip { width: 15px; height: 4px; margin: 7px 0 3px; }
    .pair { display: flex; align-items: center; height: 20.650px; padding-right: 0; margin-left: 1px; }
    .pair .cell { width: 20px !important; }
    .on { background: #dadada; border: 1px solid #b4b4b4; border-radius: 2px; width: 18px; height: 18px; display: flex; align-items: center; justify-content: center; }
  `;
  private icon(t: string) {
    const dim = t.startsWith("~");
    const n = dim ? t.slice(1) : t;
    const on = n.startsWith("!");
    const i = html`<q-icon name=${on ? n.slice(1) : n}></q-icon>`;
    return html`<span class="cell ${dim ? "dim" : ""}">${on ? html`<span class="on">${i}</span>` : i}</span>`;
  }
  render() {
    return this.items.trim().split(/\s+/).map((t) => {
      if (t === "|") return html`<span class="grip"></span>`;
      if (t === ",") return html`<span class="sep"></span>`;
      if (t === "v") return html`<span class="arr"></span>`;
      if (t === "~v") return html`<span class="arr dim"></span>`;
      if (/^[+-]\d/.test(t)) return html`<span class="sp" style="margin-${this.vertical ? "top" : "left"}:${parseFloat(t)}px"></span>`;
      if (t.endsWith(":v")) {
        const n = t.slice(0, -2);
        return html`<span class="pair">${this.icon(n)}<span class="arr ${n[0] === "~" ? "dim" : ""}"></span></span>`;
      }
      return this.icon(t);
    });
  }
}

/* ---------- contour map ---------- */
const at = (ox: number, oy: number, ky = 3) => (s: string) =>
  s.trim().split(/\s+/).map((p) => {
    const [x, y] = p.split(",").map(Number);
    return `${(ox + x / 3).toFixed(1)},${(oy + y / ky).toFixed(1)}`;
  }).join(" ");
const N = at(630, 120);
const M = at(780, 440);
const E = at(1050, 360, 2.904);

const OUT_TOP = N("820,55 860,65 905,100 915,125 935,150 920,180 945,220 975,260 1010,300 1045,325 1065,365 1080,395 1130,390 1140,440 1165,470 1180,500 1195,530 1205,560 1180,580 1210,600 1235,610 1235,635 1265,645 1285,690 1300,720 1330,750 1335,780 1365,820 1362,860 1375,895 1410,875 1435,875");
const OUT_WEST = M("375,680 350,660 310,670 275,655 245,625 180,620 165,655 155,635 165,600 190,580 195,530 190,500 195,460 165,400 165,380 200,370 185,335 140,305 120,318 100,315 105,285 105,230 35,245 20,205")
  + " " + N("465,1165 445,1125 410,1145 405,1140 370,1095 330,1115 250,1145 250,1160 220,1165 130,1170 100,1165 70,1140 65,1080 50,1050 60,1010 35,960 55,920 85,860 130,825 190,770 205,740 150,705 120,660 85,635 130,630 180,650 185,620 220,595 330,580 370,565 420,575 430,545 415,515 450,495 450,470 490,445 515,405 560,395 580,370 550,365 555,335 500,335 490,300 495,285 450,270 440,250 460,255 490,260 485,240 495,200 530,205 580,215 605,245 600,285 670,285 680,265 740,225 765,170 770,110 800,75");
const SEAM = "1108,411 1063,440 1040,460 1027,478 980,497 977,570 923,613 917,668";
const NW = `${OUT_TOP} ${SEAM} ${OUT_WEST}`;
const SE = `917,668 923,613 977,570 980,497 1027,478 1040,460 1063,440 1108,411 ` +
  E("170,150 215,180 265,190 300,205 320,235 340,235 355,190 335,200 330,185 335,160 350,150 355,110 345,78 400,62 415,45 435,55 440,85 470,80 475,120 500,135 520,145 545,130 590,130 595,150 630,140 660,175 700,205 725,262 705,285 730,292 722,355 685,372 680,385 655,415 665,465 650,520 670,540 690,565 700,600 685,660 705,665 730,645 765,655 785,680 825,665 845,685 835,715 800,740 805,780 820,812 785,825 780,870 770,915 835,948 920,930 935,940 925,975 942,1000 940,1030 985,1045 988,1100 990,1150 985,1210 965,1218 935,1205 910,1175 870,1185 850,1218 775,1212 730,1220 690,1205 655,1240 585,1295 550,1260 520,1275 515,1290 480,1295 445,1325 480,1345 480,1365 450,1380 445,1400 405,1418 385,1408 355,1430 280,1412 280,1440 265,1490 235,1515 190,1530 165,1505 130,1500 110,1480 45,1487 15,1460 0,1430") + " " +
  M("785,1235 755,1215 745,1190 705,1165 715,1215 610,1185 580,1160 605,1110 587,1105 600,1000 610,980 600,830 612,775 595,720 575,680 580,650 605,625 580,605 555,640 535,670 480,705 465,690 410,685 400,655");

type Patch = [number, string];
const nwPatches: Patch[] = [
  [0.58, N("180,640 420,570 640,580 1000,620 1300,720 1365,820 1100,950 600,920 200,1100 100,1000 100,860 210,740")],
  [0.4, N("440,250 495,200 580,215 605,245 600,285 555,335 490,330")],
  [0.8, N("720,290 770,215 790,300 790,400 760,460 700,500 650,525 600,490 580,440 640,400 690,370")],
  [0.6, N("800,150 815,80 870,70 890,120 870,170 820,180")],
  [0.8, N("770,160 800,140 815,200 790,290 770,240")],
  [0.28, N("600,285 680,290 700,340 680,370 640,380 600,375 570,330")],
  [0.25, N("930,200 1000,300 985,320 950,290")],
  [0.16, N("765,110 800,75 800,130 770,180 740,240 700,280 680,265 740,225")],
  [0.32, N("540,400 580,390 570,450 600,520 640,570 620,560 560,520 520,520 460,500 470,470")],
  [0.2, N("640,545 700,510 780,460 830,420 890,400 960,370 1000,400 960,400 900,420 860,445 820,460 780,490 760,510 770,540 740,590 720,610 660,580")],
  [0.72, N("985,310 1040,320 1060,380 1030,415 980,380")],
  [0.68, N("880,430 940,390 985,450 970,490 910,470")],
  [0.1, N("1020,435 1090,400 1140,440 1110,470 1040,470")],
  [0.86, N("810,465 860,465 940,500 900,508 815,490")],
  [0.8, N("770,515 900,520 1000,520 1010,535 920,545 860,540 775,535")],
  [0.72, N("740,560 780,545 870,560 880,590 840,610 745,595")],
  [0.84, N("820,625 860,640 960,640 1060,625 1000,645 870,655 825,645")],
  [0.25, N("780,625 815,632 830,650 1000,652 1000,665 900,672 790,650")],
  [0.82, N("180,620 330,580 440,590 420,620 340,640 250,625 190,645")],
  [0.25, N("215,655 260,635 310,640 290,665 230,670")],
  [0.84, N("105,640 190,670 250,680 380,655 340,685 260,720 240,760 200,740 190,700 140,690")],
  [0.74, N("310,730 400,690 490,670 500,700 460,770 400,780 330,755")],
  [0.68, N("480,770 560,700 700,640 770,690 760,740 640,770 540,780")],
  [0.84, N("400,820 470,805 540,798 560,808 500,825 420,838")],
  [0.76, N("160,830 210,755 280,790 380,850 600,880 700,880 600,910 420,905 260,940 210,940 190,890")],
  [0.78, N("190,980 350,950 560,920 540,1000 430,1010 330,1040 200,1100")],
  [0.26, N("140,840 200,900 210,950 190,980 190,1080 130,1150 100,1160 70,1100 55,1010 75,940 90,900")],
  [0.74, N("85,860 130,825 160,830 120,880 75,920")],
  [0.36, N("130,1165 190,1110 330,1050 530,1010 540,1060 380,1080 370,1095 250,1145")],
  [0.8, N("1220,740 1365,820 1400,900 1300,1030 1180,1050 1090,980 1080,880 1180,790")],
  [0.74, N("860,860 900,780 960,740 1060,730 1160,720 1100,780 1060,880 960,910 930,870")],
  [1, N("1130,910 1200,890 1330,830 1370,870 1340,930 1260,970 1240,1000 1160,960")],
  [1, N("1080,880 1110,840 1150,850 1130,910 1090,925")],
  [0.55, N("1040,970 1100,960 1170,1000 1190,1060 1120,1080 1050,1110 1030,1050")],
  [0.95, N("640,985 760,935 870,930 1080,930 1100,960 950,968 720,990")],
  [0.84, M("400,130 600,140 590,250 560,370 400,400 380,200")],
  [0.56, M("20,200 380,200 360,320 200,370 100,280")],
  [0.8, M("240,170 390,155 385,190 300,195")],
  [0.9, M("20,208 130,212 60,240")],
  [0.68, M("165,380 400,340 380,440 300,560 170,620 190,500")],
  [0.2, M("500,430 560,340 590,380 470,470 430,510 380,580 340,650 280,655 240,615 300,560 330,500 400,420 450,370")],
  [0.14, M("620,170 740,115 775,130 770,170 740,200 660,240 620,350 590,390 560,400 560,340 580,260")],
  [0.72, M("390,570 430,510 500,430 600,380 600,500 500,690 410,685")],
];
/* narrow ravines and lake shores drawn as light lines through the massif: width, density, points */
const nwLines: [number, number, string][] = [
  [5, 0.2, N("460,800 560,795 620,800")],
  [2.8, 0, N("1075,890 1085,860 1125,820 1070,880 1080,840 1100,800")],
  [2, 0.15, N("960,830 1000,780 1050,745 1110,720")],
  [2, 0.15, N("870,850 900,800 940,750")],
  [2, 0.3, N("930,860 960,800 1020,740")],
  [2, 0, N("1110,945 1150,905 1220,890 1300,850")],
  [2, 0, N("1140,930 1160,970 1220,985 1235,1000")],
  [2, 0.1, N("1240,1010 1280,960 1330,920 1370,890")],
  [4, 0.15, N("1300,1010 1340,960 1400,905 1420,880")],
  [2, 0.1, N("270,950 380,905 460,920")],
  [1.5, 0.15, N("200,1000 300,945 420,925 540,930")],
  [2, 0.15, N("770,760 775,820 770,880")],
  [2, 0.1, N("810,880 830,840 880,790")],
  [1.5, 0.2, N("330,840 450,850 600,870")],
  [1.5, 0.2, N("400,860 520,840 640,860")],
  [2, 0.3, M("330,500 340,460 330,400 390,330")],
  [3, 0.25, M("545,370 545,280 580,200")],
];
const darkLines = [
  N("805,75 795,140 770,200 700,330"), N("800,75 840,65 880,110 920,140"), N("940,200 1010,300 1070,370"),
  N("205,740 150,705 120,660 85,635"), N("205,740 185,775 130,825 85,860 60,920 75,950 100,1050 130,1150"),
  N("205,740 300,820 380,850 620,870 740,880"), N("600,560 660,590 740,625 760,660"), N("380,1085 530,1060 545,1000 560,970 600,935 720,900"),
  N("580,400 575,460 610,500 650,530 700,510 770,460"), N("430,540 500,545 600,565"), N("1240,735 1300,780 1360,820"),
  N("560,400 560,450 580,480"), N("515,1075 560,1110 620,1130 660,1110"), N("380,810 440,820 520,800 600,790"),
  N("1050,1110 1100,1070 1160,1050 1210,1070"), N("630,1000 640,980 760,940"), N("130,1150 200,1110 330,1050"),
  N("85,990 130,965 190,1000 190,1020 120,1020 90,1000"), N("90,940 200,945 300,940"), N("150,850 130,890 200,950 120,1100"),
  N("760,620 775,650 770,690 740,680 745,640 760,620"), N("405,1110 480,1095 540,1060"),
  N("810,465 860,460 940,500 900,510 815,490 805,470"), N("770,510 900,520 1000,520 1015,535"), N("740,560 780,545 870,560 890,585"),
  N("820,625 870,655 1000,645 1070,620"), N("250,740 300,695 390,660 440,620"), N("250,760 360,800 440,815"),
  M("300,655 320,570 370,560 430,520 440,460 510,430"), M("380,480 400,430 450,440 500,400 570,390"), M("240,615 300,580 390,470"),
  M("250,620 300,625 305,655"), M("400,470 440,480 540,410"), M("340,540 385,470 380,440"), M("420,450 430,380 470,360 520,370"),
  M("110,275 200,290 330,260"), M("20,205 160,205 380,165"), M("580,340 600,250 585,200 620,170 760,100"),
];
const terrace = [
  N("545,1055 560,970 620,930 780,895 920,880 930,918 780,933 640,968 600,1020 620,1120 560,1120 480,1100 405,1135 380,1085 470,1070"),
  N("630,995 720,1000 900,980 1040,965 1040,1050 1030,1085 860,1090 740,1110 650,1128 610,1110 620,1040"),
  N("250,745 290,700 380,680 430,620 510,600 460,630 400,690 300,715 270,760 350,770 420,790 470,770 500,700 505,760 460,815 370,805 270,785"),
];

const sePatches: Patch[] = [
  [0.9, M("600,170 760,190 870,430 850,640 700,700 560,640 420,680 400,600 590,380 640,260")],
  [0.14, M("620,170 740,115 775,130 770,170 740,200 660,240 620,350 590,390 560,400 580,260")],
  [0.26, M("765,130 778,180 800,220 830,270 870,320 885,370 912,385 880,430 850,380 810,330 775,270 760,200")],
  [0.55, E("170,560 250,480 370,390 330,430 290,510 200,570")],
  [0.28, E("105,605 200,575 260,520 300,450 370,380 400,300 430,200 450,130 440,60 475,80 480,130 510,140 480,180 465,270 430,370 380,450 320,540 250,600 180,640 160,680 110,720 70,720 60,640 40,600")],
  [0.14, E("60,620 105,612 170,605 180,635 150,670 120,695 80,700 70,660")],
  [0.1, E("270,530 300,485 318,490 315,530 290,560")],
  [0.1, E("430,220 455,170 480,160 460,240 435,300 415,340 400,330")],
  [0.48, E("90,720 170,700 230,710 200,740 130,770 100,760")],
  [0.2, E("65,720 95,720 95,780 130,790 140,800 100,880 75,850 60,880 30,920 15,930 45,850 45,800")],
  [0.2, E("25,300 40,260 130,190 165,150 170,160 120,230 60,270 20,330")],
  [0.22, E("495,735 520,730 510,800 550,850 580,890 580,930 545,880 515,820 495,810")],
  [0.6, M("600,700 640,640 690,690 640,720 632,900 650,1000 640,1100 690,1190 610,1185 590,1100 605,980 605,800")],
  [0.74, M("640,650 690,650 660,740")],
  [0.72, M("770,860 820,870 830,980 860,1030 1000,1060 1060,1020 1100,1060 1020,1110 1000,1200 900,1180 820,1120 760,1090 820,1060 790,1000")],
  [0.55, M("880,1130 950,1090 1020,1100 960,1140 1030,1190 900,1170 830,1130")],
  [0.65, M("650,440 700,420 690,500 660,540")],
  [0.45, M("985,860 1050,880 1080,900 1030,940 1000,900")],
  [0.35, E("165,1240 200,1230 240,1230 280,1260 230,1255")],
  [0.4, E("370,1310 400,1300 440,1325 385,1360")],
];
const seLines: [number, number, string][] = [
  [1.4, 0, M("885,670 890,720 880,800")], [1.2, 0.3, M("835,670 820,780 800,810")], [2.5, 0, M("870,910 875,970 892,1000")],
  [2.500, 0, M("1003,700 1003,820 1010,870 1030,910")], [1.5, 0.45, M("975,700 970,780 950,830")], [1.5, 0.4, M("1030,770 1040,860 1075,890")],
  [1.5, 0, M("1055,1000 1100,1035")], [1.2, 0.35, M("920,1195 960,1220 985,1265")], [1, 0.3, M("980,1260 1030,1245")],
  [3, 0.2, E("175,830 185,870 210,875 260,862")], [2.5, 0.35, E("185,830 215,790 240,720")],
  [1, 0.2, E("295,865 330,820 370,770 440,738 495,738")], [1.3, 0.1, E("515,732 548,710 548,680")],
  [3, 0, E("515,280 550,245")], [1.2, 0.35, E("550,245 580,190 595,150")], [1, 0.4, E("465,290 515,278")],
  [1.5, 0, E("645,572 668,558")], [1.2, 0.4, E("578,360 575,430")], [1, 0.4, E("600,740 605,680")], [1, 0.35, E("655,620 635,740")],
  [2, 0.1, E("365,1163 410,1152 435,1133")], [1, 0.35, E("435,1133 465,1080 445,1040 455,940")],
  [1, 0.2, E("440,1165 520,1175 550,1203 600,1210 650,1180 690,1165")], [1.3, 0.3, E("330,1030 340,990 328,950 365,942")], [1.3, 0.3, E("290,905 320,930")],
  [1.3, 0, E("680,868 705,870")], [2, 0, E("390,1300 415,1305 445,1325")], [1, 0.4, E("895,1065 905,950")], [1, 0.4, E("810,1060 890,1062 930,1120 960,1130")],
  [1, 0.3, E("580,930 600,970 660,975")], [1, 0.3, E("690,985 705,1005")], [1, 0.4, E("320,230 318,290 300,320")],
  [2, 0.4, M("650,450 655,520 665,535")], [2.5, 0.5, M("735,515 710,600")], [1.5, 0.4, M("1050,510 1025,590 1000,620")],
  [1, 0.3, M("690,1112 740,1106")], [1, 0.4, M("705,860 770,850")], [2, 0.4, M("840,830 845,880")], [2, 0.3, M("775,870 810,920")],
  [1.5, 0.2, E("90,1235 120,1260 125,1285")], [1, 0.4, E("545,1135 605,1125")], [3, 0.45, E("390,270 370,370")],
  [1, 0.5, E("100,330 105,420")], [1, 0.5, E("200,350 215,440")], [2, 0.5, E("160,480 175,495")], [2, 0.4, E("415,510 440,515")], [2, 0.4, E("583,485 585,520")],
  /* radiating gullies of the southern summit */
  [1, 0.35, M("890,1130 860,1060")], [1, 0.35, M("890,1130 830,1090 780,1080")], [1, 0.35, M("890,1130 940,1070 950,1040")],
  [1, 0.35, M("890,1130 960,1100 1000,1095")], [1, 0.35, M("890,1130 970,1160 1020,1190")], [1, 0.35, M("890,1130 840,1160 820,1170")],
  [1.2, 0.3, M("890,1130 885,1180 900,1210")],
];

const tri = (n: number) => Array.from({ length: n }, (_, i) => i % 2).join(" ");
const grey = (d: number) => { const v = Math.round(d * 255); return `rgb(${v},${v},${v})`; };

interface Grain { freq: string; oct: number; steps: number; seed: number; soften: number; rough: number; drift: string; amt: number; gain: number }
const contourFilter = (id: string, g: Grain) => svg`
  <filter id=${id} filterUnits="userSpaceOnUse" x="600" y="110" width="820" height="810" color-interpolation-filters="sRGB">
    <feTurbulence type="fractalNoise" baseFrequency="0.11" numOctaves="3" seed="7" result="w"/>
    <feDisplacementMap in="SourceGraphic" in2="w" scale=${g.rough} xChannelSelector="R" yChannelSelector="G" result="d0"/>
    <feGaussianBlur in="d0" stdDeviation=${g.soften} result="d1"/>
    <feTurbulence type="fractalNoise" baseFrequency=${g.drift} numOctaves="3" seed="33"/>
    <feColorMatrix values="1 0 0 0 0  1 0 0 0 0  1 0 0 0 0  0 0 0 0 1" result="m"/>
    <feComposite in="d1" in2="m" operator="arithmetic" k1=${g.amt} k2=${1 - g.amt / 2} k3="0" k4="0"/>
    <feColorMatrix values="1 0 0 0 0  0 1 0 0 0  0 0 1 0 0  0 0 0 0 1" result="d"/>
    <feTurbulence type="fractalNoise" baseFrequency=${g.freq} numOctaves=${g.oct} seed=${g.seed}/>
    <feColorMatrix values="1 0 0 0 0  1 0 0 0 0  1 0 0 0 0  0 0 0 0 1"/>
    <feComponentTransfer result="t"><feFuncR type="table" tableValues=${tri(g.steps)}/></feComponentTransfer>
    <feComposite in="d" in2="t" operator="arithmetic" k1="0" k2="0.6" k3="0.4" k4="0"/>
    <feColorMatrix values="0 0 0 0 0.627  0 0 0 0 0.322  0 0 0 0 0.176  ${g.gain} 0 0 0 ${0.47 - g.gain / 2}"/>
  </filter>`;

@customElement("contour-map")
class ContourMap extends LitElement {
  static styles = css`
    :host { display: block; background: #fff; overflow: hidden; }
    svg { display: block; width: 1101px; height: 788px; }
    .ink { fill: none; stroke: #a0522d; stroke-width: 1.300; stroke-linejoin: round; opacity: .9; }
  `;
  render() {
    const shape = ([d, p]: Patch) => svg`<polygon points=${p} fill=${grey(d)}/>`;
    const stroke = ([w, d, p]: [number, number, string]) => svg`<polyline points=${p} fill="none" stroke=${grey(d)} stroke-width=${w} stroke-linecap="round"/>`;
    const ground = svg`<rect x="560" y="80" width="900" height="860" fill="#000"/>`;
    return html`<svg viewBox="461 118 1101 788">
      <defs>
        <clipPath id="extent"><rect x="625" y="122" width="770" height="775"/></clipPath>
        ${contourFilter("fNW", { freq: "0.034 0.048", oct: 5, steps: 27, seed: 11, soften: 0.8, rough: 9, drift: "0.022 0.04", amt: 0.9, gain: 5.5 })}
        ${contourFilter("fSE", { freq: "0.15 0.09", oct: 3, steps: 17, seed: 5, soften: 0.4, rough: 5, drift: "0.06 0.018", amt: 0.6, gain: 6 })}
        ${contourFilter("fTer", { freq: "0.02 0.008", oct: 4, steps: 41, seed: 21, soften: 0.3, rough: 4, drift: "0.03 0.03", amt: 0.3, gain: 6 })}
        <filter id="wobble" filterUnits="userSpaceOnUse" x="600" y="110" width="820" height="810">
          <feTurbulence type="fractalNoise" baseFrequency="0.06" numOctaves="3" seed="4"/>
          <feDisplacementMap in="SourceGraphic" scale="14" xChannelSelector="R" yChannelSelector="G"/>
        </filter>
      </defs>
      <g clip-path="url(#extent)">
        <g filter="url(#fSE)">
          ${ground}
          <polygon points=${SE} fill=${grey(1)}/>
          ${sePatches.map(shape)}${seLines.map(stroke)}
        </g>
        <g filter="url(#fNW)">
          ${ground}
          <polygon points=${NW} fill=${grey(0.5)}/>
          ${nwPatches.map(shape)}${nwLines.map(stroke)}
          ${terrace.map((p) => svg`<polygon points=${p} fill="#000"/>`)}
        </g>
        <g filter="url(#fTer)">
          ${ground}
          ${terrace.map((p) => svg`<polygon points=${p} fill=${grey(0.34)}/>`)}
        </g>
        <g filter="url(#wobble)">${darkLines.map((p) => svg`<polyline class="ink" points=${p}/>`)}</g>
      </g>
    </svg>`;
  }
}

const MENUS: [string, string, string, number][] = [
  ["", "", "Projet", 38.5], ["", "É", "diter", 38], ["V", "u", "e", 30], ["", "C", "ouche", 47], ["", "P", "références", 65],
  ["E", "x", "tensions", 59], ["", "V", "ecteur", 46], ["", "R", "aster", 40], ["", "B", "ase de données", 88], ["", "I", "nternet", 47.500],
  ["", "M", "aillage", 51], ["", "", "MMQGIS", 53], ["", "T", "raitement", 61], ["", "A", "ide", 30],
];

@customElement("app-root")
class AppRoot extends LitElement {
  static styles = css`
    :host { display: flex; flex-direction: column; width: 1600px; height: 931px; overflow: hidden; background: #efefef; color: #111;
      font: 10.500px/14px "Open Sans", "Noto Sans", sans-serif; letter-spacing: -.2px; white-space: nowrap; }
    .title { height: 20px; display: flex; align-items: center; background: #fff; color: #000; padding-left: 1px; }
    .title .name { flex: 1; margin-left: 4px; letter-spacing: -.38px; }
    .win { display: flex; gap: 28.500px; padding-right: 16px; padding-bottom: 2px; }
    .win q-icon { width: 11px; height: 11px; }
    .menu { height: 16px; display: flex; align-items: center; padding-left: 7.500px; color: #000; border-bottom: 1px solid #d2d2d2; }
    .menu span { flex: none; letter-spacing: -.4px; }
    u { text-underline-offset: 1px; }
    .row { height: 27px; box-sizing: border-box; display: flex; align-items: center; border-bottom: 1px solid #adadad; border-top: 1px solid #fff; background: linear-gradient(#f8f8f8, #eee); margin-left: -5px; }
    .row.r1 { height: 26px; }
    .row.r3 { border-bottom: 2px solid #cfcfcf; padding-top: 1px; }
    .main { height: 790px; display: flex; }
    .left { width: 36px; border-right: 2px solid #b2b2b2; background: linear-gradient(90deg, #fbfbfb, #ececec); box-sizing: content-box; height: 790px; }
    .dock { width: 416px; display: flex; flex-direction: column; }
    .dhead { height: 18px; display: flex; align-items: center; padding: 0 2px 0 3px; gap: 3px; }
    .dhead b { flex: 1; font-weight: 400; font-size: 11px; letter-spacing: -.45px; }
    .dhead q-icon { width: 9.500px; height: 9.500px; }
    .dtools { height: 25px; padding-left: 2px; padding-bottom: 2px; box-sizing: border-box; }
    .tree { height: 723px; background: #fff; border: 1px solid #b0b0b0; border-left: 0; }
    .sel { height: 16px; background: #0a7ad6; color: #fff; display: flex; align-items: center; }
    .sel .cb { margin-left: 20px; border-color: #ddd; }
    .sel .ln { width: 14px; height: 1px; background: #3c6796; margin-left: 6px; }
    .sel .nm { margin-left: 5px; font-weight: 700; text-decoration: underline; font-size: 10.500px; letter-spacing: -.36px; }
    .cb { width: 11px; height: 11px; box-sizing: border-box; border: 1px solid #aaa; background: #fff; display: flex; }
    .cb svg { width: 9px; height: 9px; }
    .tabs { display: flex; align-items: flex-start; height: 20px; border-top: 1px solid #b0b0b0; margin-top: 1px; }
    .tab { box-sizing: border-box; height: 17px; border: 1px solid #b6b6b6; border-top: 0; border-left: 0; border-radius: 0 0 2px 2px; background: #dcdcdc; display: flex; align-items: center; justify-content: center; letter-spacing: -.45px; }
    .t1 { width: 56px; height: 19px; background: #f6f6f6; padding-right: 2px; } .t2 { width: 98px; } .t3 { width: 68px; }
    contour-map { flex: none; width: 1101px; height: 788px; margin-left: 5px; border: 1px solid #b0b0b0; border-top-color: #ddd; box-sizing: content-box; }
    .right { flex: 1; background: linear-gradient(90deg, #ececec, #f8f8f8); padding-left: 0; }
    .status { height: 24px; display: flex; align-items: center; letter-spacing: -.48px; }
    .box { box-sizing: border-box; height: 19px; border: 1px solid #aaa; border-radius: 2px; background: #fff; display: flex; align-items: center; padding-left: 4px; flex: none; overflow: hidden; }
    .search { width: 206px; margin-left: 2.500px; color: #777; padding-left: 7px; letter-spacing: -.15px; }
    .search q-icon { width: 11px; height: 11px; margin-right: 5px; }
    .coord { letter-spacing: -.75px; }
    .box .v { flex: 1; }
    .spin { width: 11px; height: 100%; border-left: 1px solid #bbb; display: flex; flex-direction: column; justify-content: center; align-items: center; gap: 3px; }
    .up, .dn { width: 0; border: 2.600px solid transparent; }
    .up { border-bottom: 3.400px solid #555; border-top: 0; } .dn { border-top: 3.400px solid #555; border-bottom: 0; }
    .drop { width: 16px; height: 100%; border-left: 1px solid #ccc; display: flex; align-items: center; justify-content: center; }
    .drop .dn { border-width: 3.400px 3px 0; }
    .dis { color: #777; background: #eee; border-color: #b4b4b4; }
    .dis .up { border-bottom-color: #888; } .dis .dn { border-top-color: #888; }
    .px { background: #f4f4f4; } .px .drop { border: 0; }
    .lbl { flex: none; letter-spacing: -.55px; }
    .lbl.crd { letter-spacing: -.85px; }
  `;
  render() {
    const spin = html`<span class="spin"><i class="up"></i><i class="dn"></i></span>`;
    const check = html`<span class="cb"><svg viewBox="0 0 10 10"><path d="M1.800 5 4 8 8.300 1.500" fill="none" stroke="#000" stroke-width="1.600"/></svg></span>`;
    const w = (n: number) => `width:${n}px`;
    return html`
      <div class="title"><q-icon name="logo"></q-icon><span class="name">*Projet sans titre — QGIS [VCA]</span>
        <div class="win"><q-icon name="min"></q-icon><q-icon name="max"></q-icon><q-icon name="close"></q-icon></div></div>
      <div class="menu">${MENUS.map(([a, k, b, n]) => html`<span style=${w(n)}>${a}${k ? html`<u>${k}</u>` : nothing}${b}</span>`)}</div>
      <div class="row r1"><q-bar items="| new open save layout manager style | db | vec raster mesh comma feather vmesh -1 pg v +1.5 wms wcs wfs pack v +1 | layers pack vecY featherY chip meshY , vmeshY , -2 | labY +1 diag , labB labR , -1 ~lab1 ~lab2 ~lab3 ~lab4 ~lab5 | tri +0.5 net1 net2 | help"></q-bar></div>
      <div class="row r2"><q-bar items="| ~pencils pencil +1 ~savee ~vecY ~shape ~v ~vertex ~v ~editc ~trash ~cut ~copy ~paste ~undo ~redo | +2.5 ~arc ~v +1.2 ~circ ~v +1.2 ~ell ~v +1.2 ~rec ~v +1.2 ~pent ~v | ~sq ~dotc ~v +1.2 ~vgrey ~v +1.2 ~b1 ~b2 ~b3 ~b4 ~b5 ~b6 ~b7 ~b5 ~b8 ~b9 ~vgrey ~split ~scis ~scis ~scis ~merge ~rot ~v | +2 magnet ~snapv !dots"></q-bar>
        <span class="box dis" style=${w(70)}><span class="v">12</span>${spin}</span>
        <span class="box dis px" style="${w(70)};margin-left:1.500px"><span class="v">px</span><span class="drop"><i class="dn"></i></span></span>
        <q-bar items="+1 topo snapg ~xx ~hh ~v +1 ~nn"></q-bar></div>
      <div class="row r3"><q-bar items="| +0.5 ~grA ~grB ~v +1 ~grC ~grD ~v | abc v +1.5 selc +0.6 poly pline +0.7 star txt , tbub v | -0.5 dbw arrow , mag whats +0.5 pdf , -0.5 tools qm | -1.5 cloud cloudg , box box2 , -0.5 hammer | ring v +1 cxy cred cx +0.5 v +0.5 czig +1 hatch +0.5 n123 redb v +0.5 ~lastA ~lastB"></q-bar></div>
      <div class="main">
        <div class="left"><q-bar vertical items="-3 | !hand panto zin zout zfull zsel zlay ~znat zlast ~znext mapv map3 book bookl clock refresh | ident abacus gear sigma table:v ruler:v tip ~gearz:v | sel:v selv:v desel:v selpin"></q-bar></div>
        <div class="dock">
          <div class="dhead"><b>Couches</b><q-icon name="undock"></q-icon><q-icon name="shut"></q-icon></div>
          <q-bar class="dtools" items="brush grp +0.5 eye filter +0.5 eps v +1 exp col rem"></q-bar>
          <div class="tree"><div class="sel">${check}<span class="ln"></span><span class="nm">srtm30m_contour_10m_38</span></div></div>
          <div class="tabs"><span class="tab t1">Couches</span><span class="tab t2">Ordre des couches</span><span class="tab t3">Explorateur</span></div>
        </div>
        <contour-map></contour-map>
        <div class="right"><q-bar vertical items="-3 | rst cross gridr | py down bino ~torch hill prof man wbino | gtfs | redplus:v"></q-bar></div>
      </div>
      <div class="status">
        <span class="box search"><q-icon name="seek"></q-icon>Taper pour trouver (Ctrl+K)</span>
        <span class="lbl crd" style="${w(54.5)};margin-left:703px">Coordonnée</span><span class="box coord" style=${w(88)}>993 221 6 500 607</span>
        <q-icon style="margin:0 10px 0 3px" name="mouse"></q-icon>
        <span class="lbl" style=${w(32)}>Échelle</span><span class="box" style=${w(72)}><span class="v">1:567 161</span><span class="drop"><i class="dn"></i></span></span>
        <q-icon style="margin:0 6px 0 9px" name="lock"></q-icon>
        <span class="lbl" style=${w(29)}>Loupe</span><span class="box" style=${w(71)}><span class="v">100%</span>${spin}</span>
        <span class="lbl" style="${w(44)};margin-left:8px">Rotation</span><span class="box" style=${w(71)}><span class="v">0,0 °</span>${spin}</span>
        <span style="margin:0 4px 0 6px">${check}</span><span class="lbl" style=${w(41)}>Rendu</span>
        <q-icon style="width:12px;height:12px;margin-right:2px" name="epsg"></q-icon><span class="lbl" style=${w(66)}>EPSG:2154</span><q-icon name="bubble"></q-icon>
      </div>`;
  }
}
